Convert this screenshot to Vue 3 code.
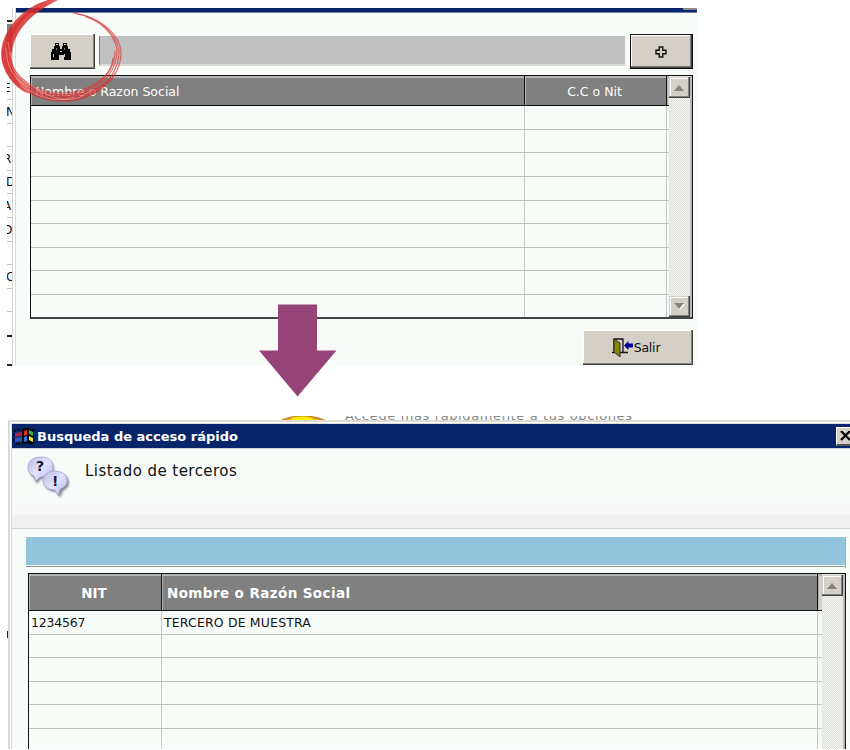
<script setup>
const strip = [
  { t: 'E', h: 23 }, { t: 'N', h: 24 }, { t: '', h: 23 }, { t: 'R', h: 24 }, { t: 'D', h: 23 },
  { t: 'A', h: 24 }, { t: 'O', h: 24 }, { t: '', h: 23 }, { t: 'C', h: 24 }, { t: '', h: 23 },
]
const rows = [['1234567', 'TERCERO DE MUESTRA'], ['', ''], ['', ''], ['', ''], ['', ''], ['', '']]
const strands = [
  'M62 -2C32 2 2 25 2 55C3 80 30 100 62 101C94 101 121 80 121 52C120 34 99 16 73 13',
  'M50 0C20 8 3 31 4 55C6 79 30 98 62 99C94 99 119 78 119 51C117 33 98 17 77 14',
  'M54 -1C23 8 5 32 6 56C7 78 31 97 62 97C92 97 117 76 117 50C115 34 100 21 86 17',
  'M46 3C18 15 7 36 8 57C10 78 34 95 62 95C91 95 115 75 115 51',
  'M38 7C16 20 8 38 10 58C13 77 36 93 62 93C90 93 112 76 113 58',
]
</script>

<template>
  <main class="page">
    <section class="first">
      <div class="strip">
        <div class="strip-top"></div>
        <div v-for="(s, i) in strip" :key="i" class="strip-cell" :class="{ left: s.t === 'C' || s.t === 'N' || s.t === 'D' }" :style="{ height: s.h + 'px' }"><span>{{ s.t }}</span></div>
        <div class="strip-line"></div>
        <div class="strip-line last"></div>
      </div>
      <div class="win1">
        <div class="title1"><i></i></div>
        <div class="tools">
          <button class="btn search">
            <svg width="20" height="18" viewBox="0 0 20 18" shape-rendering="crispEdges">
              <path d="M4 0h4v3h1v3h2V3h1V0h4v3h1v3h2v3h1v8h-7v-5H8v5H0V9h1V6h2V3h1z" />
              <path d="M5 1h2v1H5zM13 1h2v1h-2zM2 11h1v3H2zM13 11h1v3h-1zM9 8h2v1H9z" fill="#d4d0c8" />
              <path d="M5 5h1v2H5zM13 5h1v2h-1z" fill="#777" />
            </svg>
          </button>
          <div class="field"></div>
          <button class="btn plus">
            <svg width="12" height="12" viewBox="0 0 12 12"><path d="M4.200 1h3.600v3.200H11v3.600H7.800V11H4.200V7.800H1V4.200h3.200z" fill="#d4d0c8" stroke="#111" stroke-width="1.400" /></svg>
          </button>
        </div>
        <div class="grid1">
          <div class="table">
            <div class="row head"><span class="a"><b class="h1">Nombre o Razon Social</b></span><span class="c"><b class="h2">C.C o Nit</b></span><span></span></div>
            <div v-for="n in 9" :key="n" class="row"><span></span><span></span><span></span></div>
          </div>
          <div class="scroll">
            <i class="sb"><svg width="10" height="6"><path d="M0 6L5 0l5 6z" fill="#858580" /></svg></i>
            <i class="sb"><svg width="11" height="7"><path d="M1 1h10L6 7z" fill="#fff" /><path d="M0 0h10L5 6z" fill="#858580" /></svg></i>
          </div>
        </div>
        <div class="foot">
          <button class="btn exit">
            <svg width="22" height="21" viewBox="0 0 22 21">
              <path d="M2 14V2h9v13M0 15.500h3M8 15.500h8" fill="none" stroke="#111" stroke-width="1.300" />
              <path d="M2 2l6 4v14l-6-5z" fill="#868600" stroke="#222" stroke-width=".9" />
              <path d="M12 8.500l4.500-4.500v2.500H21v4h-4.500V13z" fill="#000099" />
            </svg>
            <span>Salir</span>
          </button>
        </div>
      </div>
    </section>

    <div class="between">
      <svg class="ball" width="44" height="4"><ellipse cx="22" cy="11" rx="27" ry="10.500" fill="#f7c90a" stroke="#c98b28" stroke-width="2" /><ellipse cx="21" cy="3" rx="11" ry="2.500" fill="#fff000" /></svg>
      <div class="cut"><span>Accede más rapidamente a tus opciones</span></div>
    </div>

    <section class="second">
      <div class="title2">
        <svg width="22" height="19" viewBox="0 0 22 19">
          <path d="M9 2l5-1.500 4 1.500h3v14l-2 2-5-2-5 2z" fill="#080808" />
          <path d="M1 3h2v2H1zM4 2h3v2H4zM0 7h3v2H0zM0 12h3v2H0zM3 16h4v2H3z" fill="#0b0b16" />
          <path d="M2 6l7-1v4l-7 1z" fill="#a32652" /><path d="M2 11l7-1v4l-7 1z" fill="#3655b5" />
          <path d="M11 4l3-1v5l-3 1z" fill="#e62a20" /><path d="M16 3l4 2v4l-4-2z" fill="#38b936" />
          <path d="M11 10l3-1v5l-3 1z" fill="#287de8" /><path d="M16 9l4 2v4l-4-2z" fill="#f4e72c" />
        </svg>
        <h1>Busqueda de acceso rápido</h1>
        <div class="close"><svg width="12" height="10"><path d="M1 0l9 9M10 0L1 9" stroke="#000" stroke-width="2.200" /></svg></div>
      </div>
      <div class="banner">
        <svg width="43" height="43" viewBox="0 0 43 43">
          <defs>
            <linearGradient id="bub" x1="0" y1="0" x2="1" y2="1"><stop offset="0" stop-color="#b9bbe6" /><stop offset=".5" stop-color="#e2e2ff" /><stop offset="1" stop-color="#b3b5e2" /></linearGradient>
            <filter id="soft" x="-20%" y="-20%" width="140%" height="140%"><feGaussianBlur stdDeviation="1" /></filter>
          </defs>
          <g fill="#606072" opacity=".75" filter="url(#soft)">
            <path d="M15 3C7 3 2 7 2 13c0 4 2 7 5 9l3 6 4-5c8 0 13-4 13-10S23 3 15 3z" />
            <path d="M30 17c-7 0-12 4-12 10s5 9 12 9l3 6 3-7c4-2 6-5 6-8 0-6-5-10-12-10z" />
          </g>
          <g fill="url(#bub)" stroke="#a3a5c8" stroke-width=".8">
            <path d="M14 1C6 1 1 5 1 11c0 4 2 7 6 9l2 5 4-4c8 0 13-4 13-10S22 1 14 1z" />
            <path d="M28 15c-7 0-12 4-12 10s5 9 12 9l3 6 2-7c5-2 7-5 7-8 0-6-5-10-12-10z" />
          </g>
          <text x="9" y="15" class="mark">?</text><text x="25" y="30" class="mark">!</text>
        </svg>
        <h2>Listado de terceros</h2>
      </div>
      <div class="blue"></div>
      <div class="grid2">
        <div class="table">
          <div class="row head"><span class="c"><b class="h3">NIT</b></span><span class="a"><b class="h4">Nombre o Razón Social</b></span><span></span></div>
          <div v-for="(r, i) in rows" :key="i" class="row"><span><em class="num">{{ r[0] }}</em></span><span><em class="name">{{ r[1] }}</em></span><span></span></div>
        </div>
        <div class="scroll"><i class="sb"><svg width="10" height="6"><path d="M0 6L5 0l5 6z" fill="#858580" /></svg></i></div>
      </div>
    </section>

    <svg class="overlay" width="350" height="400">
      <g fill="none" stroke="#d93b38" stroke-linecap="round">
        <path v-for="(d, i) in strands" :key="i" :d="d" stroke-width="1.200" opacity=".7" />
      </g>
      <path d="M62 -2C32 2 1 24 1 55C2 82 32 101 62 101.500C86 102 106 91 117 70C105 87 86 95 62 94C36 93 13 78 11 57C11 34 30 12 62 -2z" fill="#d93030" opacity=".5" />
      <path d="M60 -1C24 7 2 31 2 56C3 72 12 86 28 94C15 82 12 68 12 57C12 36 26 15 60 -1z" fill="#d62828" opacity=".65" />
      <path d="M6 48Q6 75 29 90T75 97M8 42Q12 76 42 92T91 90" fill="none" stroke="#fff" stroke-width=".7" opacity=".45" />
      <path d="M278 304.500h39V350.500h19.500L297.500 396.500 259 350.500h19z" fill="#964477" />
    </svg>
    <div class="speck"></div>
  </main>
</template>

<style>
body { background: #fff; overflow: hidden; }
</style>
<style scoped>
* { box-sizing: border-box; }
.page { position: relative; width: 850px; height: 750px; overflow: hidden; background: #fff; font-family: "DejaVu Sans", sans-serif; color: #111; padding-top: 8px; }
.first { display: flex; width: 690px; height: 358px; margin-left: 7px; background: #f8fcf9; }
.strip { width: 5px; overflow: hidden; background: #fcfdfb; font-size: 12px; flex: none; }
.strip-top { height: 69px; background: linear-gradient(#fcfdfb 0 12px, #222 12px 14px, #fcfdfb 14px 16px, #808080 16px 44px, #fcfdfb 44px); }
.strip-cell { border-bottom: 1px solid #c6c6c2; display: flex; align-items: center; overflow: hidden; }
.strip-cell span { margin-left: -4px; }
.strip-cell.left span { margin-left: -1px; }
.strip-line { height: 25px; border-bottom: 2px solid #222; }
.strip-line.last { height: 29px; }
.win1 { flex: 1; border-left: 1px solid #d6d4ce; box-shadow: inset 2px 0 #fff, inset 3px 0 #dcdad5; padding-left: 3px; min-width: 0; }
.title1 { height: 5px; background: #07256b; border-bottom: 1px solid #708098; display: flex; justify-content: flex-end; }
.title1 i { width: 14px; height: 2px; background: #888; }
.tools { display: flex; padding: 21px 4px 0 14px; height: 62px; }
.btn { background: #d4d0c8; border: 0; padding: 0; margin: 0; display: flex; align-items: center; justify-content: center; box-shadow: inset -1px -1px #404040, inset -2px -2px #808080, inset 1px 1px #fff; font: inherit; color: #111; }
.search { width: 65px; height: 35px; padding-right: 3px; }
.field { width: 527px; height: 30px; margin: 2px 5px 0 4px; background: #c1c1c1; border-bottom: 2px solid #dadad6; border-left: 1px solid #777; }
.plus { width: 63px; height: 35px; border: 1px solid #111; padding-right: 2px; }
.grid1 { width: 663px; height: 244px; margin-left: 14px; border: 1px solid #111; border-bottom: 2px solid #444; display: flex; box-shadow: inset 0 1px #888; }
.table { flex: 1; display: grid; min-width: 0; }
.grid1 .table { grid-template-rows: 30px repeat(8, 23.640px) 1fr; }
.row { display: grid; min-height: 0; }
.grid1 .row { grid-template-columns: 494px 142px 1fr; }
.row > span { border-right: 1px solid #c6c8c6; border-bottom: 1px solid #c0c2c0; display: flex; align-items: center; min-width: 0; }
.row > span:last-child { border-right: 0; }
.row:last-child > span { border-bottom: 0; }
.head > span { background: #808080; color: #fff; border-right: 1px solid #111; border-bottom: 1px solid #111; box-shadow: inset 1px 2px #b4b4b4; }
.head > span:last-child { background: #d4d0c8; }
.head b { font-weight: 400; white-space: nowrap; }
.c { justify-content: center; }
.grid1 .a { padding: 2px 0 0 4px; }
.grid1 .c { padding: 2px 2px 0 0; }
.h1 { font-size: 12.500px; letter-spacing: 0; }
.h2 { font-size: 12.500px; }
.scroll { width: 23px; flex: none; display: flex; flex-direction: column; justify-content: space-between; background: repeating-conic-gradient(#dcdcd6 0 25%, #f6f8f4 0 50%) 0 0 / 2px 2px; border-right: 2px solid #bbb; padding-top: 1px; }
.sb { width: 21px; height: 21px; background: #d4d0c8; box-shadow: inset -1px -1px #404040, inset -2px -2px #808080, inset 1px 1px #d4d0c8, inset 2px 2px #fff; display: flex; align-items: center; justify-content: center; padding-right: 1px; }
.foot { display: flex; justify-content: flex-end; padding: 11px 4px 0 0; }
.exit { width: 110px; height: 35px; font-size: 12.500px; padding-right: 4px; }
.exit span { letter-spacing: -.2px; }
.between { height: 54px; display: flex; align-items: flex-end; }
.ball { margin-left: 281px; }
.cut { width: 310px; height: 4px; margin-left: 20px; overflow: hidden; display: flex; align-items: flex-end; color: #888; font-size: 13px; white-space: nowrap; }
.cut span { line-height: 16px; margin-bottom: -4px; letter-spacing: .62px; }
.second { width: 842px; margin-left: 8px; height: 329px; background: #f8fcf9; border-left: 2px solid #dcdcd2; border-top: 2px solid #dcdcd2; box-shadow: inset 1px 1px #fff, inset 2px 2px #dcdcd8; padding: 2px 0 0 2px; overflow: hidden; }
.title2 { height: 24px; background: #07256b; display: flex; align-items: center; color: #fff; }
.title2 svg { margin-left: 1px; flex: none; }
.title2 h1 { margin: 0 0 0 2px; font-size: 13px; font-weight: 700; white-space: nowrap; flex: 1; }
.close { width: 14px; height: 19px; background: #d4d0c8; border-top: 1px solid #fff; border-left: 1px solid #fff; border-bottom: 2px solid #555; padding: 3px 0 0 3px; overflow: hidden; }
.title2 .close svg { display: block; margin: 0; }
.banner { height: 81px; display: flex; align-items: flex-start; padding: 7px 0 0 15px; border-top: 1px solid #cfcfd2; border-bottom: 1px solid #d0d0d2; background: linear-gradient(#f8fcf9 0 54px, #f8f8f9 56px 63px, #f0f0f0 67px); }
.mark { font: 700 14px "DejaVu Sans", sans-serif; fill: #181830; }
.banner h2 { margin: 5px 0 0 15px; font-size: 15px; font-weight: 400; line-height: 20px; white-space: nowrap; letter-spacing: .45px; }
.blue { width: 820px; height: 31px; margin: 8px 0 0 14px; background: linear-gradient(#91c5dc 0 28px, #f8fcf9 28px 29px, #929693 29px 30px, #f8fcf9 30px); border-right: 1px solid #aaa; }
.grid2 { width: 818px; height: 190px; margin: 5px 0 0 16px; border: 1px solid #111; border-bottom: 0; display: flex; box-shadow: inset 0 1px #999; }
.grid2 .table { grid-template-rows: 37px repeat(6, 23.600px); }
.grid2 .row { grid-template-columns: 133px 656px 1fr; }
.grid2 .row:last-child > span { border-bottom: 0; }
.grid2 .head b { font-weight: 700; }
.grid2 .head .c { padding: 2px 2px 0 0; }
.grid2 .head .a { padding: 2px 0 0 5px; }
.h3 { font-size: 13.500px; }
.h4 { font-size: 13.500px; letter-spacing: .4px; }
.row em { font-style: normal; font-size: 12.500px; white-space: nowrap; margin-left: 2px; }
.num { letter-spacing: -.2px; }
.name { letter-spacing: .15px; }
.overlay { position: absolute; left: 0; top: 0; }
.speck { position: absolute; left: 7px; top: 631px; width: 1px; height: 7px; background: #222; }
</style>
